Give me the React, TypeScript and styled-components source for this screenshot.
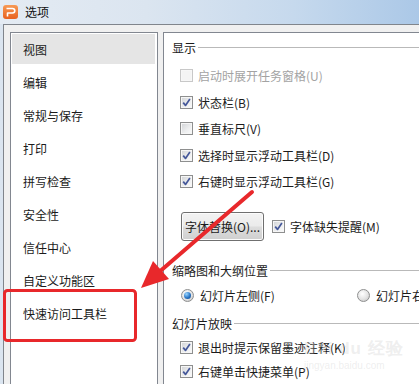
import React from 'react';
import styled, { createGlobalStyle } from 'styled-components';

const GlobalStyle = createGlobalStyle`
  html, body {
    margin: 0;
    padding: 0;
    background: #ffffff;
  }
  body {
    font-family: "Noto Sans CJK SC", "Microsoft YaHei", sans-serif;
    font-size: 12px;
    color: #1b1b1b;
  }
`;

const Window = styled.div`
  position: relative;
  width: 419px;
  height: 384px;
  overflow: hidden;
  display: flex;
  flex-direction: column;
  background: linear-gradient(90deg, #dbe5f0, #c0d5ec 60%, #adc9e8);
`;

const TitleBar = styled.div`
  flex: none;
  height: 24px;
  display: flex;
  align-items: center;
  gap: 7px;
  padding-left: 3px;
  background: linear-gradient(90deg, #e4ebf3 0%, #dbe5f0 35%, #c6d9ed 70%, #abc8e7 100%);
`;

const Title = styled.span`
  font-size: 12px;
  color: #111;
  line-height: 1;
`;

const Frame = styled.div`
  flex: 1;
  min-height: 0;
  margin-left: 3px;
  border-top: 1px solid #80858c;
  border-left: 1px solid #80858c;
  background: #f0f0f0;
  display: flex;
  gap: 5px;
  padding: 7px 0 0 6px;
`;

const NavList = styled.div`
  flex: none;
  width: 144px;
  border: 1px solid #828790;
  border-bottom: none;
  background: #ffffff;
  padding: 1px;
`;

const NavItem = styled.div<{ selected?: boolean }>`
  height: 30px;
  margin: 0 1px 3.1px 0;
  padding-left: 11px;
  display: flex;
  align-items: center;
  background: ${p => (p.selected ? '#e5e5e5' : 'transparent')};
`;

const Panel = styled.div`
  flex: 1;
  border-top: 1px solid #828790;
  border-left: 1px solid #828790;
  background: #ffffff;
  padding-top: 5px;
  display: flex;
  flex-direction: column;
  white-space: nowrap;
`;

const GroupHeader = styled.div<{ top?: number }>`
  height: 20px;
  margin-top: ${p => p.top ?? 0}px;
  padding-left: 8px;
  display: flex;
  align-items: center;
  gap: 2px;

  &::after {
    content: '';
    flex: 1;
    border-top: 1px solid #b9b9b9;
  }
`;

const CheckRow = styled.div<{ h?: number; top?: number }>`
  height: ${p => p.h ?? 27}px;
  margin-top: ${p => p.top ?? 0}px;
  padding-left: 16px;
  display: flex;
  align-items: center;
  gap: 5px;
`;

const Label = styled.span<{ disabled?: boolean }>`
  color: ${p => (p.disabled ? '#a3a3a3' : '#1b1b1b')};
`;

const Box = styled.span<{ disabled?: boolean }>`
  flex: none;
  width: 13px;
  height: 13px;
  box-sizing: border-box;
  display: grid;
  place-items: center;
  border: 1px solid ${p => (p.disabled ? '#c8c8c8' : '#8e8f8f')};
  background: ${p =>
    p.disabled
      ? '#f4f4f4'
      : 'linear-gradient(135deg, #d0d2d5 0%, #eeeff0 60%, #fbfbfb 100%)'};
  box-shadow: inset 0 0 0 1px ${p => (p.disabled ? '#f7f7f7' : '#f6f6f6')};
`;

const Check = ({ checked, disabled }: { checked?: boolean; disabled?: boolean }) => (
  <Box disabled={disabled}>
    {checked && (
      <svg width="11" height="11" viewBox="0 0 11 11">
        <path
          d="M2.2 5.6 L4.5 8.4 L8.9 2"
          fill="none"
          stroke="#45589a"
          strokeWidth="1.7"
          strokeLinejoin="round"
        />
      </svg>
    )}
  </Box>
);

const ButtonRow = styled.div`
  margin-top: 17px;
  height: 29px;
  padding-left: 17px;
  display: flex;
  align-items: center;
  gap: 8px;
`;

const Inline = styled.span`
  display: flex;
  align-items: center;
  gap: 5px;
`;

const Button = styled.button`
  height: 29px;
  padding: 0 3px;
  border: 1px solid #707070;
  border-radius: 3px;
  font-family: inherit;
  font-size: 12px;
  color: #1b1b1b;
  background: linear-gradient(#f3f3f3 0%, #ebebeb 48%, #dddddd 52%, #cfcfcf 100%);
  box-shadow: inset 0 0 0 1px #fcfcfc;
`;

const RadioRow = styled.div`
  height: 27px;
  margin-top: 1px;
  padding-left: 17px;
  display: grid;
  grid-template-columns: 176px auto;
  align-items: center;
`;

const RadioOption = styled.span`
  display: flex;
  align-items: center;
  gap: 6px;
`;

const RadioDot = styled.span<{ on?: boolean }>`
  flex: none;
  width: 13px;
  height: 13px;
  box-sizing: border-box;
  border-radius: 50%;
  border: 1px solid #8e8f8f;
  display: grid;
  place-items: center;
  background: radial-gradient(circle at 40% 35%, #ffffff 0%, #e3e3e3 55%, #bdbdbd 100%);

  &::after {
    content: '';
    width: 7px;
    height: 7px;
    border-radius: 50%;
    display: ${p => (p.on ? 'block' : 'none')};
    background: radial-gradient(circle at 35% 30%, #9ad6ff 0%, #2a76c6 55%, #0d3f7e 100%);
  }
`;

const Watermark = styled.div`
  position: absolute;
  left: 304px;
  top: 340px;
  font-family: "Liberation Sans", sans-serif;
  color: rgba(200, 200, 200, 0.3);
  line-height: 1;
  pointer-events: none;
`;

const WatermarkBig = styled.div`
  font-size: 17px;
  font-weight: bold;
  letter-spacing: 1px;
`;

const WatermarkSmall = styled.div`
  margin-top: 4px;
  font-size: 10px;
`;

const Overlay = styled.svg`
  position: absolute;
  left: 0;
  top: 0;
  pointer-events: none;
`;

const AppIcon = () => (
  <svg width="15" height="14" viewBox="0 0 15 14">
    <defs>
      <linearGradient id="ic" x1="0" y1="0" x2="0" y2="1">
        <stop offset="0" stopColor="#f79a55" />
        <stop offset="1" stopColor="#e8611f" />
      </linearGradient>
    </defs>
    <rect x="0" y="0" width="15" height="14" rx="3" fill="url(#ic)" />
    <path
      d="M3.5 3.5 H9.5 Q11.8 3.5 11.8 5.8 Q11.8 8 9.5 8 H4.5 V11.5"
      fill="none"
      stroke="#ffffff"
      strokeWidth="1.6"
      strokeLinejoin="round"
    />
  </svg>
);

const navItems = [
  '视图',
  '编辑',
  '常规与保存',
  '打印',
  '拼写检查',
  '安全性',
  '信任中心',
  '自定义功能区',
  '快速访问工具栏',
];

const displayOptions = [
  { label: '启动时展开任务窗格(U)', checked: false, disabled: true },
  { label: '状态栏(B)', checked: true },
  { label: '垂直标尺(V)', checked: false },
  { label: '选择时显示浮动工具栏(D)', checked: true },
  { label: '右键时显示浮动工具栏(G)', checked: true },
];

export default function App() {
  return (
    <>
      <GlobalStyle />
      <Window>
        <TitleBar>
          <AppIcon />
          <Title>选项</Title>
        </TitleBar>
        <Frame>
          <NavList>
            {navItems.map((item, i) => (
              <NavItem key={item} selected={i === 0}>
                {item}
              </NavItem>
            ))}
          </NavList>
          <Panel>
            <GroupHeader>显示</GroupHeader>
            {displayOptions.map((opt, i) => (
              <CheckRow key={opt.label} top={i === 0 ? 5 : 0}>
                <Check checked={opt.checked} disabled={opt.disabled} />
                <Label disabled={opt.disabled}>{opt.label}</Label>
              </CheckRow>
            ))}
            <ButtonRow>
              <Button>字体替换(O)...</Button>
              <Inline>
                <Check checked />
                <Label>字体缺失提醒(M)</Label>
              </Inline>
            </ButtonRow>

            <GroupHeader top={20}>缩略图和大纲位置</GroupHeader>
            <RadioRow>
              <RadioOption>
                <RadioDot on />
                <Label>幻灯片左侧(F)</Label>
              </RadioOption>
              <RadioOption>
                <RadioDot />
                <Label>幻灯片右侧(R)</Label>
              </RadioOption>
            </RadioRow>

            <GroupHeader top={5}>幻灯片放映</GroupHeader>
            <CheckRow h={25} top={2}>
              <Check checked />
              <Label>退出时提示保留墨迹注释(K)</Label>
            </CheckRow>
            <CheckRow h={25}>
              <Check checked />
              <Label>右键单击快捷菜单(P)</Label>
            </CheckRow>
          </Panel>
        </Frame>

        <Watermark>
          <WatermarkBig>Bai du 经验</WatermarkBig>
          <WatermarkSmall>jingyan.baidu.com</WatermarkSmall>
        </Watermark>

        {/* red annotation drawn over the dialog */}
        <Overlay width="419" height="384" viewBox="0 0 419 384">
          <rect
            x="4.5"
            y="290.5"
            width="131"
            height="50"
            rx="3"
            fill="none"
            stroke="#e8282b"
            strokeWidth="3"
          />
          <line
            x1="252"
            y1="192"
            x2="158"
            y2="273"
            stroke="#e8282b"
            strokeWidth="4"
            strokeLinecap="round"
          />
          <polygon points="141,288 153,261 169,279" fill="#e8282b" />
        </Overlay>
      </Window>
    </>
  );
}
